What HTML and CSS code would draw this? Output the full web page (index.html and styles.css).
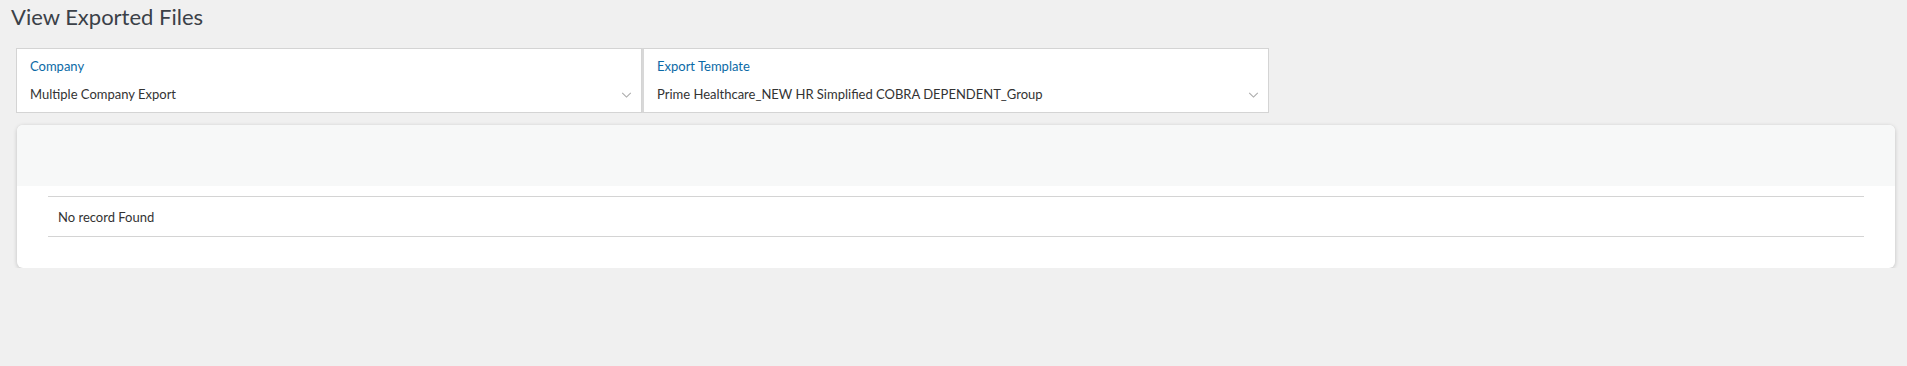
FILE: index.html
```html
<!DOCTYPE html>
<html lang="en">
<head>
  <meta charset="UTF-8" />
  <title>View Exported Files</title>
  <link rel="stylesheet" href="styles.css">
</head>
<body>

<h1 class="page-title">View Exported Files</h1>

<div class="filters">
  <div class="filter">
    <label>Company</label>
    <div class="select">
      <span>Multiple Company Export</span>
      <svg class="chevron" viewBox="0 0 12 7"><path d="M1 1l5 5 5-5" /></svg>
    </div>
  </div>
  <div class="filter">
    <label>Export Template</label>
    <div class="select">
      <span>Prime Healthcare_NEW HR Simplified COBRA DEPENDENT_Group</span>
      <svg class="chevron" viewBox="0 0 12 7"><path d="M1 1l5 5 5-5" /></svg>
    </div>
  </div>
</div>

<div class="card">
  <div class="card-header"></div>
  <div class="card-body">
    <table class="records">
      <tr><td>No record Found</td></tr>
    </table>
  </div>
</div>

</body>
</html>
```

FILE: styles.css
```css
body {
  font-family: Lato, 'Open Sans', sans-serif;
  background: #f0f0f0;
  color: #333;
  margin: 0;
  padding: 0;
}
.page-title {
  font-size: 22px;
  font-weight: 400;
  color: #3b4148;
  margin: 0;
  padding: 3px 11px 0;
  line-height: 28px;
}
.filters {
  display: flex;
  margin: 17px 0 0 16px;
  width: 1253px;
}
.filter {
  flex: 1;
  background: white;
  border: 1px solid #d4d4d4;
  height: 63px;
  padding: 0 13px;
}
.filter + .filter {
  border-left: 2px solid #d8d8d8;
}
.filter label {
  display: block;
  color: #0b6aa6;
  font-size: 13px;
  line-height: 18px;
  margin-top: 8px;
}
.select {
  display: flex;
  align-items: center;
  justify-content: space-between;
  font-size: 13px;
  color: #333;
  margin-top: 10px;
  height: 18px;
}
.chevron {
  width: 11px;
  height: 6px;
  fill: none;
  stroke: #aaa;
  stroke-width: 1.2;
  margin-right: -4px;
  margin-top: 1px;
}
.card {
  background: white;
  margin: 12px 12px 0 17px;
  border-radius: 6px;
  box-shadow: 0 1px 4px rgba(0,0,0,0.2);
  overflow: hidden;
}
.card-header {
  background: #f7f8f8;
  height: 61px;
}
.card-body {
  padding: 10px 31px 31px;
}
.records {
  width: 100%;
  border-collapse: collapse;
  border-top: 1px solid #d4d4d4;
  border-bottom: 1px solid #d4d4d4;
}
.records td {
  height: 39px;
  padding: 0 10px;
  font-size: 13px;
  color: #333;
}
```
